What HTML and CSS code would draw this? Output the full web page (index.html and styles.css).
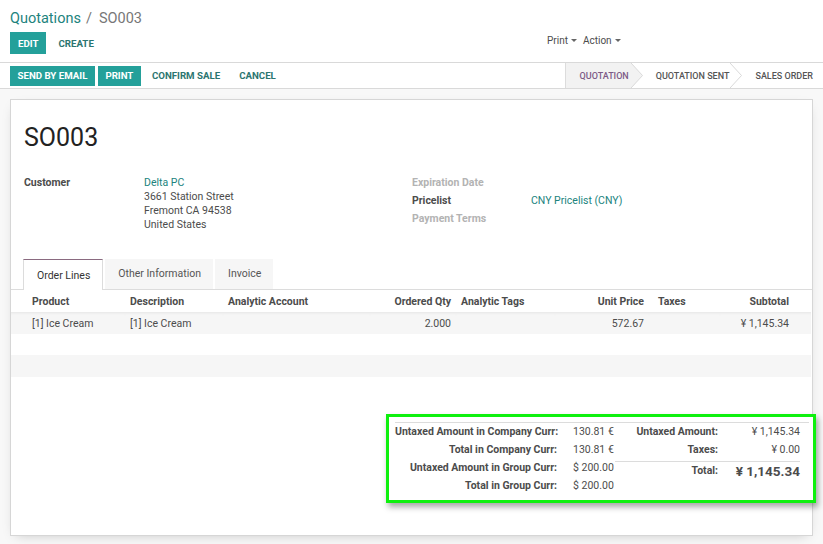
FILE: index.html
```html
<!DOCTYPE html>
<html>
<head>
<meta charset="utf-8">
<title>Quotations / SO003</title>
<link rel="stylesheet" href="styles.css">
</head>
<body>
<div class="cp">
  <div class="crumbs"><span class="crumb-link">Quotations</span><span class="crumb-sep">/</span><span class="crumb-cur">SO003</span></div>
  <div class="cp-row">
    <div class="cp-btns"><span class="btn primary">EDIT</span><span class="btn flat">CREATE</span></div>
    <div class="cp-side"><span class="dd">Print<i class="caret"></i></span><span class="dd">Action<i class="caret"></i></span></div>
  </div>
</div>
<div class="statusbar">
  <div class="sb-btns">
    <span class="btn primary small">SEND BY EMAIL</span><span class="btn primary small">PRINT</span><span class="btn flat small">CONFIRM SALE</span><span class="btn flat small">CANCEL</span>
  </div>
  <div class="sb-status">
    <span class="st active">QUOTATION</span><svg class="chev" width="12" height="25" viewBox="0 0 12 25"><polygon points="0,0 11.5,12.5 0,25" fill="#f2f2f2"/><polyline points="0,0 11.5,12.5 0,25" fill="none" stroke="#d9d9d9" stroke-width="1"/></svg>
    <span class="st">QUOTATION SENT</span><svg class="chev" width="12" height="25" viewBox="0 0 12 25"><polyline points="0,0 11.5,12.5 0,25" fill="none" stroke="#d9d9d9" stroke-width="1"/></svg>
    <span class="st last">SALES ORDER</span>
  </div>
</div>
<div class="content">
  <div class="sheet">
    <div class="sheet-head">
      <h1 class="title">SO003</h1>
      <div class="groups">
        <div class="grp left">
          <div class="lbl">Customer</div>
          <div class="val addr"><span class="link">Delta PC</span><br>3661 Station Street<br>Fremont CA 94538<br>United States</div>
        </div>
        <div class="grp right">
          <div class="lbl muted">Expiration Date</div><div class="val"></div>
          <div class="lbl">Pricelist</div><div class="val"><span class="link">CNY Pricelist (CNY)</span></div>
          <div class="lbl muted">Payment Terms</div><div class="val"></div>
        </div>
      </div>
    </div>
    <div class="tabs">
      <span class="tab active">Order Lines</span><span class="tab">Other Information</span><span class="tab">Invoice</span>
    </div>
    <table class="lines">
      <colgroup><col style="width:114px"><col style="width:98px"><col style="width:147px"><col style="width:86px"><col style="width:99px"><col style="width:94px"><col style="width:71px"><col style="width:91px"></colgroup>
      <thead>
        <tr><th class="first">Product</th><th>Description</th><th>Analytic Account</th><th class="num">Ordered Qty</th><th>Analytic Tags</th><th class="num">Unit Price</th><th class="tax">Taxes</th><th class="num last">Subtotal</th></tr>
      </thead>
      <tbody>
        <tr class="odd top"><td class="first">[1] Ice Cream</td><td>[1] Ice Cream</td><td></td><td class="num">2.000</td><td></td><td class="num">572.67</td><td class="tax"></td><td class="num last">¥ 1,145.34</td></tr>
        <tr><td class="first"></td><td></td><td></td><td></td><td></td><td></td><td></td><td class="last"></td></tr>
        <tr class="odd"><td class="first"></td><td></td><td></td><td></td><td></td><td></td><td></td><td class="last"></td></tr>
      </tbody>
    </table>
    <div class="totals-wrap">
      <div class="totals">
        <div class="tot-left">
          <div class="tl">Untaxed Amount in Company Curr:</div><div class="tv">130.81 €</div>
          <div class="tl">Total in Company Curr:</div><div class="tv">130.81 €</div>
          <div class="tl">Untaxed Amount in Group Curr:</div><div class="tv">$ 200.00</div>
          <div class="tl">Total in Group Curr:</div><div class="tv">$ 200.00</div>
        </div>
        <div class="tot-right">
          <div class="tr-row"><span class="tl">Untaxed Amount:</span><span class="tv">¥ 1,145.34</span></div>
          <div class="tr-row"><span class="tl">Taxes:</span><span class="tv">¥ 0.00</span></div>
          <div class="tr-row total"><span class="tl">Total:</span><span class="tv big">¥ 1,145.34</span></div>
        </div>
      </div>
    </div>
  </div>
</div>
</body>
</html>
```
FILE: styles.css
```css
* { box-sizing: border-box; }
html, body { margin: 0; padding: 0; }
body {
  font-family: Roboto, "Noto Sans", sans-serif;
  font-size: 10.5px;
  color: #4c4c4c;
  background: #f8f8f8;
  width: 823px;
  height: 544px;
  overflow: hidden;
}

/* control panel */
.cp {
  background: #fff;
  border-bottom: 1px solid #d9d9d9;
  padding: 8px 10px 8px 10px;
  height: 63px;
}
.crumbs {
  font-size: 14.5px;
  line-height: 20px;
  height: 20px;
  padding-top: 1px;
}
.crumb-link { color: #21837d; }
.crumb-sep { color: #777; margin: 0 7px 0 5px; }
.crumb-cur { color: #777; }
.cp-row {
  display: flex;
  align-items: center;
  margin-top: 4px;
  height: 22px;
}
.cp-btns { flex: 0 0 537px; display: flex; align-items: center; }
.cp-side { display: flex; gap: 6px; font-size: 10px; color: #4c4c4c; margin-top: -5px; }
.dd { display: inline-flex; align-items: center; }
.caret {
  display: inline-block;
  width: 0; height: 0;
  margin-left: 3px;
  border-top: 3px solid #666;
  border-left: 3px solid transparent;
  border-right: 3px solid transparent;
}

.btn {
  display: inline-flex;
  align-items: center;
  justify-content: center;
  height: 22px;
  padding: 0 8px;
  font-size: 9.7px;
  font-weight: 700;
  white-space: nowrap;
}
.btn.primary { background: #24a09a; color: #fff; }
.btn.flat { color: #2b7570; padding: 0 12px; }
.btn.small { height: 20px; }

/* statusbar */
.statusbar {
  background: #fff;
  border-bottom: 1px solid #d9d9d9;
  height: 26px;
  display: flex;
  justify-content: space-between;
  padding-left: 10px;
}
.sb-btns { display: flex; align-items: center; gap: 3px; }
.sb-btns .primary { padding: 0 7.5px; }
.sb-btns .flat { padding: 0 8px; }
.sb-status { display: flex; align-items: stretch; height: 25px; }
.st {
  display: flex;
  align-items: center;
  font-size: 9px;
  font-weight: 500;
  color: #555;
  padding: 0 1px 0 13px;
}
.st.active {
  background: #f2f2f2;
  color: #7c5a86;
  border-left: 1px solid #dcdcdc;
  padding-left: 14px;
  padding-right: 2px;
}
.st.last { padding-right: 10px; }
.chev { display: block; flex: 0 0 12px; }

/* content */
.content { padding: 10px 10px 0 10px; }
.sheet {
  background: #fff;
  border: 1px solid #d6d6d6;
  box-shadow: 0 4px 12px -6px rgba(0,0,0,0.25);
  height: 437px;
}
.sheet-head { padding: 22px 12px 0 13px; }
.title {
  margin: 0;
  font-size: 25px;
  font-weight: 400;
  line-height: 32px;
  color: #222;
}
.groups { display: flex; margin-top: 19px; }
.grp { display: grid; align-content: start; }
.grp.left { flex: 0 0 388px; grid-template-columns: 120px 1fr; padding-top: 3px; }
.grp.right { flex: 1; grid-template-columns: 119px 1fr; grid-auto-rows: 18px; align-items: center; }
.lbl { font-weight: 700; color: #4c4c4c; }
.lbl.muted { color: #b3b3b3; }
.left .lbl, .addr { line-height: 14px; }
.link { color: #21837d; }

/* tabs */
.tabs {
  margin-top: 27px;
  display: flex;
  align-items: flex-end;
  padding-left: 12px;
  border-bottom: 1px solid #dcdcdc;
  height: 31px;
}
.tab {
  display: flex;
  align-items: center;
  height: 30px;
  padding: 0 12px 2px 13px;
  background: #f6f6f6;
  color: #555;
  margin-left: 2px;
  font-size: 10.5px;
}
.tab.active {
  background: #fff;
  color: #333;
  border: 1px solid #dcdcdc;
  border-top: 1px solid #8a6a80;
  border-bottom: 0;
  height: 31px;
  margin: 0 0 -1px 0;
  padding: 1px 12px 0 13px;
}

/* lines table */
.lines {
  width: 800px;
  table-layout: fixed;
  border-collapse: collapse;
}
.lines th, .lines td {
  padding: 0 5px;
  text-align: left;
  white-space: nowrap;
  overflow: hidden;
}
.lines th { height: 22px; font-weight: 700; color: #4c4c4c; }
.lines td { height: 21.5px; padding-top: 1px; }
.lines .first { padding-left: 21px; }
.lines .last { padding-right: 22px; }
.lines .num { text-align: right; }
.lines .tax { padding-left: 9px; }
.lines tr.odd td { background: #f6f6f6; }
.lines tr.top td { box-shadow: inset 0 3px 3px -2px rgba(0,0,0,0.07); }

/* totals */
.totals-wrap { display: flex; justify-content: flex-end; margin-top: 37px; margin-right: -4px; }
.totals {
  width: 430px;
  height: 89px;
  border: 3px solid #0ef00e;
  box-shadow: 2px 4px 6px rgba(0,0,0,0.35);
  background: #fff;
  padding: 5px 4px 0 6px;
  display: flex;
  align-items: flex-start;
}
.totals .tl { font-weight: 700; text-align: right; white-space: nowrap; }
.totals .tv { white-space: nowrap; }
.tot-left {
  flex: 0 0 220px;
  display: grid;
  grid-template-columns: 162px 58px;
  grid-auto-rows: 18px;
  align-items: center;
  border-top: 1px solid #dcdcdc;
}
.tot-left .tv { padding-left: 16px; }
.tot-right {
  flex: 1;
  border-top: 1px solid #dcdcdc;
  padding-right: 9px;
}
.tr-row {
  display: flex;
  align-items: center;
  height: 18px;
}
.tr-row .tl { flex: 0 0 103px; }
.tr-row .tv { flex: 1; text-align: right; }
.tr-row.total {
  border-top: 1px solid #dcdcdc;
  margin-top: 2px;
  height: 19px;
}
.tv.big { font-size: 13.5px; font-weight: 700; color: #4c4c4c; }
```
